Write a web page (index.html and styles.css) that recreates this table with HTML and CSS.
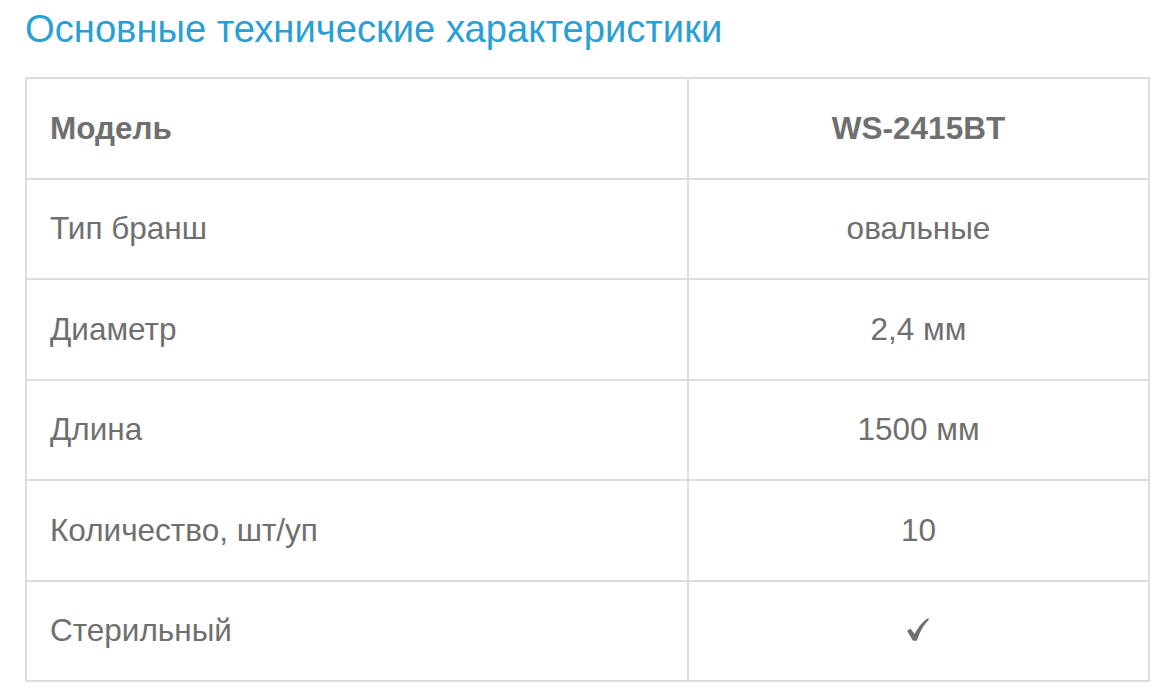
FILE: index.html
```html
<!DOCTYPE html>
<html lang="ru">
<head>
<meta charset="utf-8">
<link rel="stylesheet" href="styles.css">
</head>
<body>
<div class="page">
  <h2 class="title">Основные технические характеристики</h2>
  <table class="specs">
    <tr class="head"><td>Модель</td><td>WS-2415BT</td></tr>
    <tr><td>Тип бранш</td><td>овальные</td></tr>
    <tr><td>Диаметр</td><td>2,4 мм</td></tr>
    <tr><td>Длина</td><td>1500 мм</td></tr>
    <tr><td>Количество, шт/уп</td><td>10</td></tr>
    <tr><td>Стерильный</td><td class="check"><svg class="check-icon" width="22" height="23" viewBox="0 0 22 23" aria-label="да"><path d="M0 12.8 L3.6 10.8 L7.6 16 C10.6 10 15 4 21 0 L22 1.6 C17 6.5 13.2 13 9.8 22.8 L6 22.8 Z" fill="#6f6f6f"/></svg></td></tr>
  </table>
</div>
</body>
</html>
```

FILE: styles.css
```css
html, body {
  margin: 0;
  padding: 0;
  background: #fff;
}
.page {
  padding: 0 0 0 25px;
  font-family: "Liberation Sans", Arial, sans-serif;
}
.title {
  margin: 0;
  padding-top: 10px;
  height: 77px;
  box-sizing: border-box;
  font-size: 38.2px;
  font-weight: normal;
  color: #2a9fd6;
  line-height: 38px;
}
.specs {
  border-collapse: collapse;
  width: 1125px;
  color: #6f6f6f;
  font-size: 31.5px;
}
.specs td {
  border: 2px solid #ddd;
  height: 100.5px;
  box-sizing: border-box;
  padding: 0 0 0 23px;
  vertical-align: middle;
}
.specs td:first-child {
  width: 662px;
}
.specs td + td {
  text-align: center;
  padding: 0;
}
.specs .head td {
  font-weight: bold;
}
.check-icon {
  display: block;
  margin: 0 auto;
  position: relative;
  left: -1px;
  top: -1px;
}
```
